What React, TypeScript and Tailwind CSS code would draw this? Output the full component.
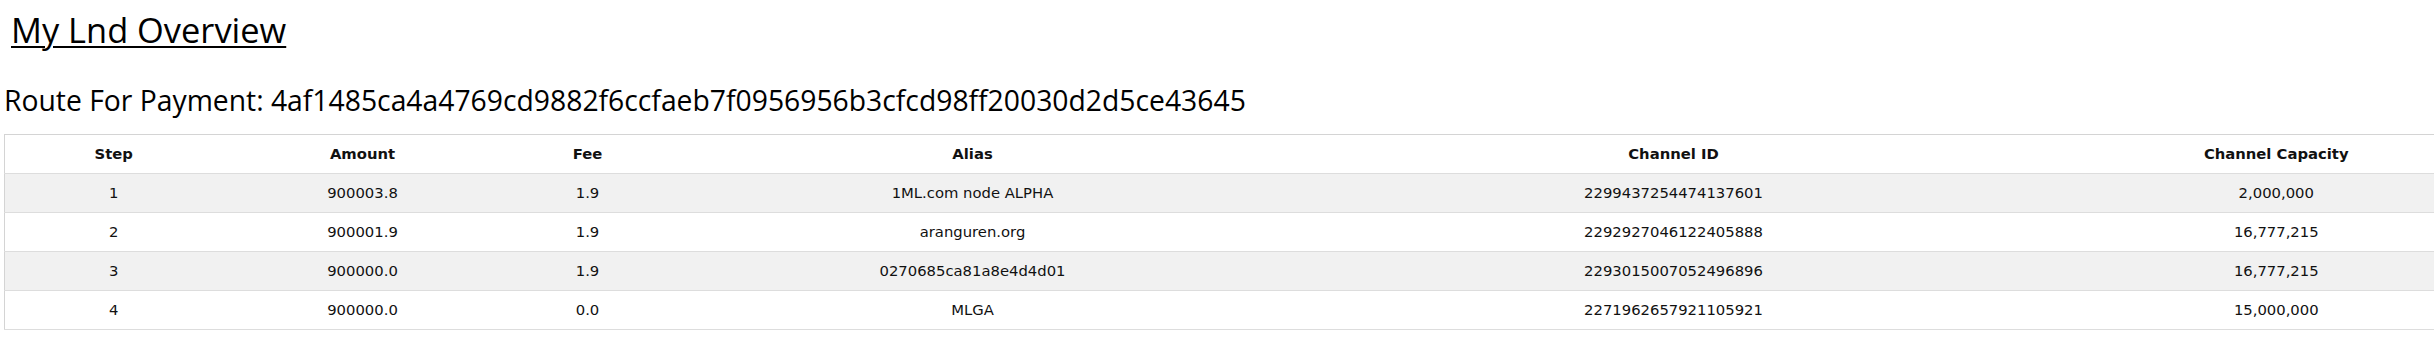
const hops = [
  { step: 1, amount: "900003.8", fee: "1.9", alias: "1ML.com node ALPHA", chanId: "2299437254474137601", capacity: "2,000,000" },
  { step: 2, amount: "900001.9", fee: "1.9", alias: "aranguren.org", chanId: "2292927046122405888", capacity: "16,777,215" },
  { step: 3, amount: "900000.0", fee: "1.9", alias: "0270685ca81a8e4d4d01", chanId: "2293015007052496896", capacity: "16,777,215" },
  { step: 4, amount: "900000.0", fee: "0.0", alias: "MLGA", chanId: "2271962657921105921", capacity: "15,000,000" },
];

const columns = [
  { label: "Step", width: "w-[218px]" },
  { label: "Amount", width: "w-[280px]" },
  { label: "Fee", width: "w-[170px]" },
  { label: "Alias", width: "w-[600px]" },
  { label: "Channel ID", width: "w-[802px]" },
  { label: "Channel Capacity", width: "w-[404px]" },
];

export default function App() {
  return (
    <div className="min-h-screen w-full overflow-hidden bg-white text-black">
      <h1 className="pl-[11px] pt-[10px] font-['Open_Sans',sans-serif] text-[34.4px] font-normal leading-[40px]">
        <span className="underline decoration-2 underline-offset-[3px]">My Lnd Overview</span>
      </h1>

      <h2 className="mt-[33px] pl-[4px] font-['Open_Sans',sans-serif] text-[28.3px] font-normal leading-[34px]">
        Route For Payment: 4af1485ca4a4769cd9882f6ccfaeb7f0956956b3cfcd98ff20030d2d5ce43645
      </h2>

      <div className="mt-[17px] pl-[4px]">
        <table className="w-[2474px] table-fixed border-collapse border border-[#d4d4d4] font-['DejaVu_Sans','Verdana',sans-serif] text-[14.8px] text-[#111]">
          <thead>
            <tr className="h-[39px] border-b border-[#dddddd]">
              {columns.map((col) => (
                <th key={col.label} className={`${col.width} text-center font-bold`}>
                  {col.label}
                </th>
              ))}
            </tr>
          </thead>
          <tbody>
            {hops.map((hop, i) => (
              <tr key={hop.step} className={`h-[39px] border-b border-[#dddddd] ${i % 2 === 0 ? "bg-[#f1f1f1]" : "bg-white"}`}>
                <td className="text-center">{hop.step}</td>
                <td className="text-center">{hop.amount}</td>
                <td className="text-center">{hop.fee}</td>
                <td className="text-center">{hop.alias}</td>
                <td className="text-center">{hop.chanId}</td>
                <td className="text-center">{hop.capacity}</td>
              </tr>
            ))}
          </tbody>
        </table>
      </div>
    </div>
  );
}
